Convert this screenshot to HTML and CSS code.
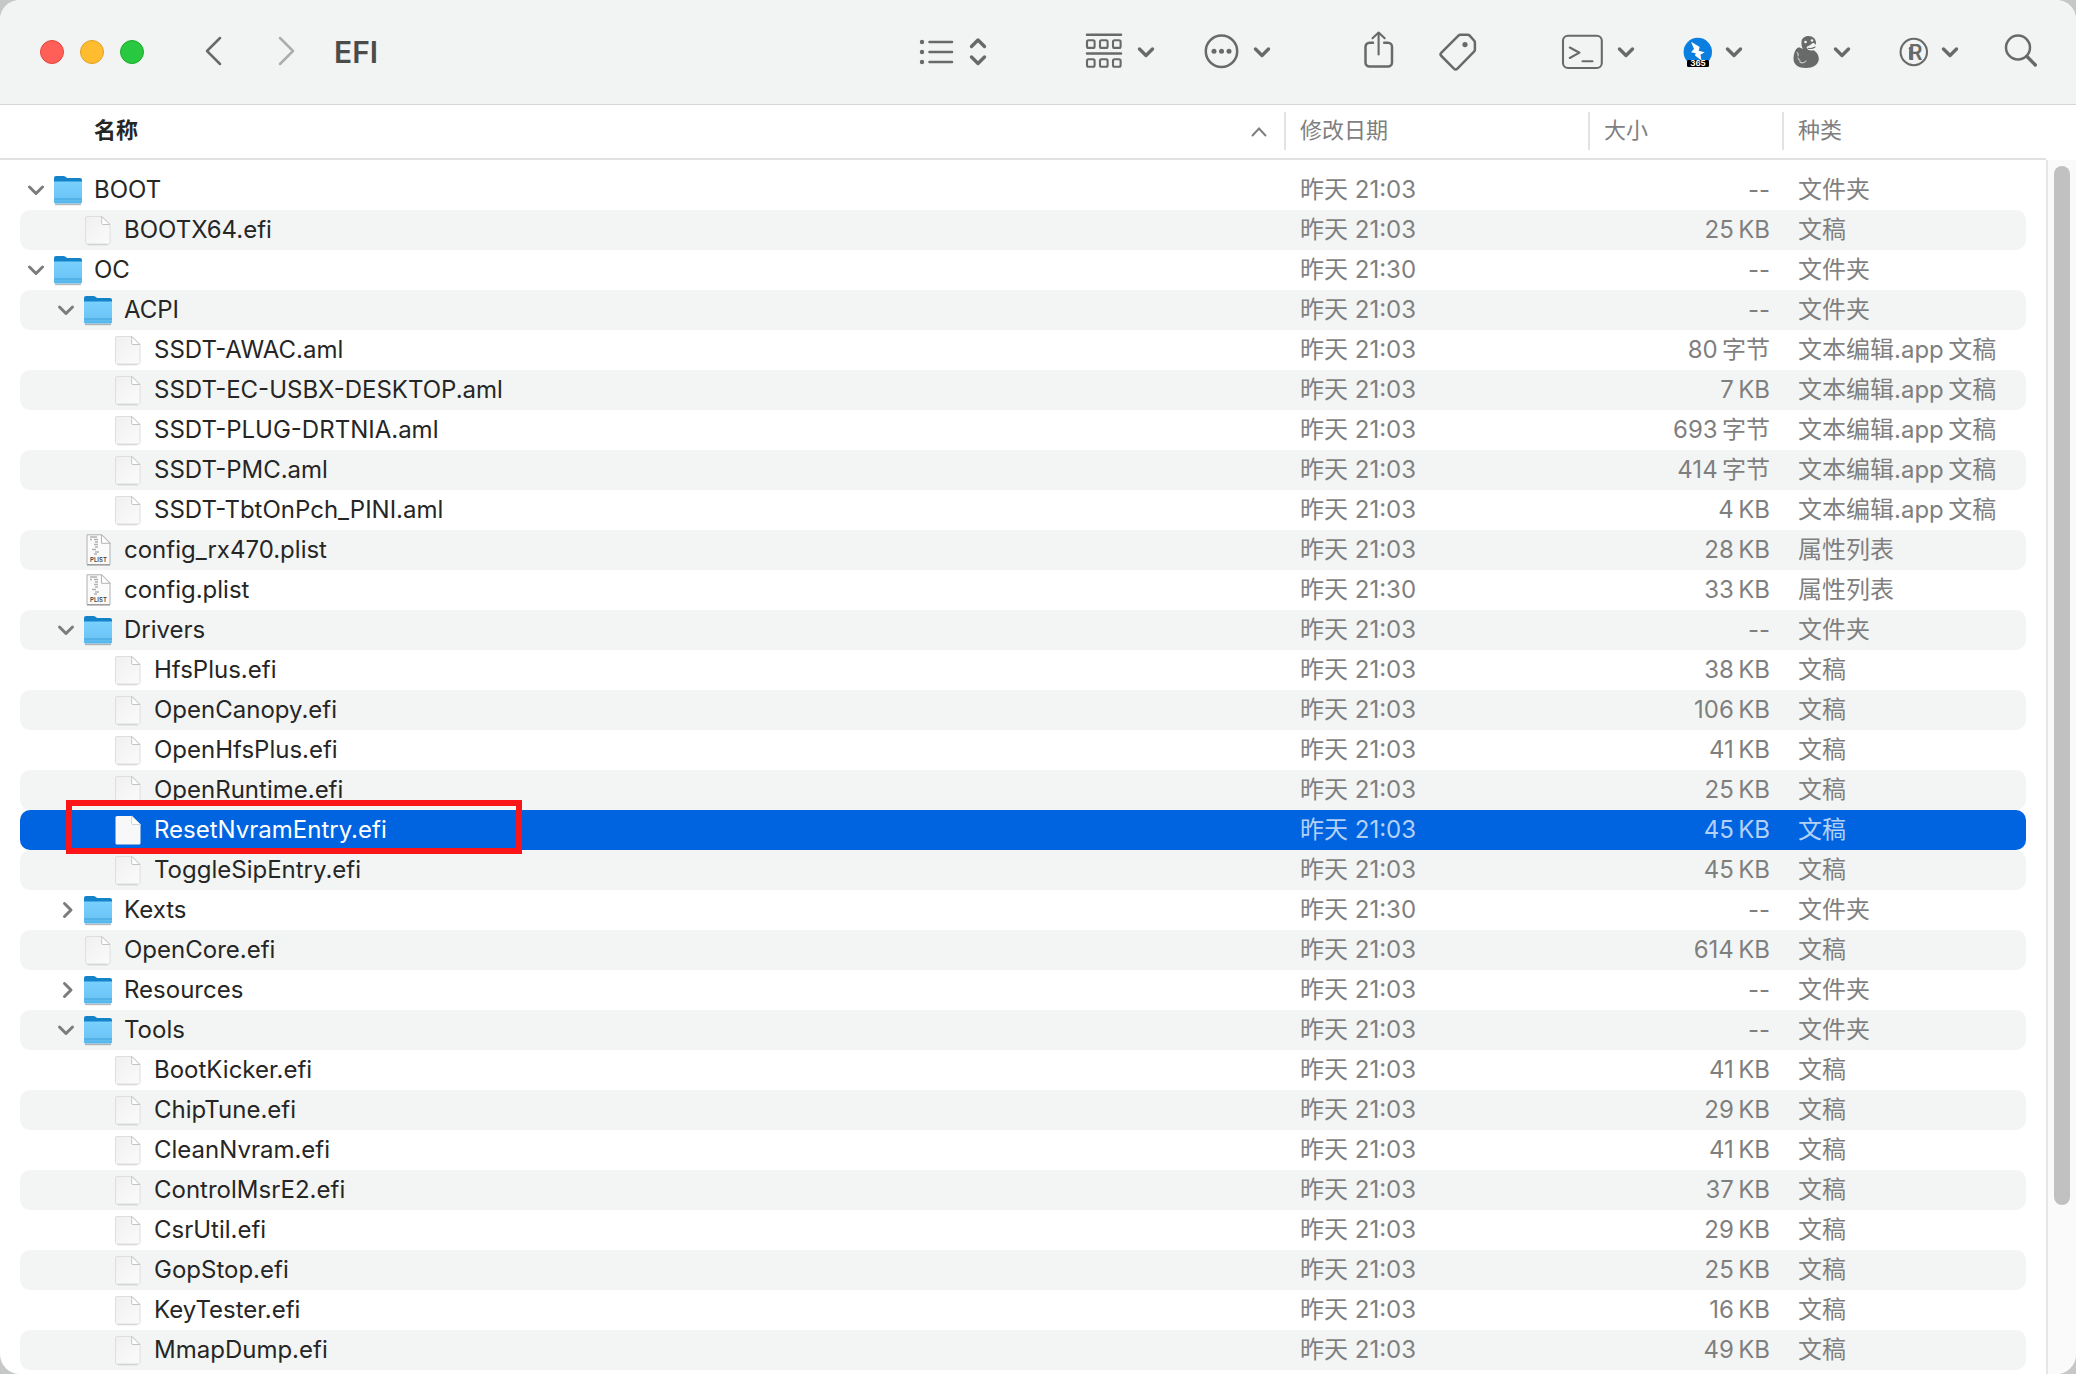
FILE: index.html
```html
<!DOCTYPE html>
<html lang="zh-CN">
<head>
<meta charset="utf-8">
<title>EFI</title>
<link rel="stylesheet" href="styles.css">
</head>
<body>
<svg class="sprite" aria-hidden="true">
  <defs>
    <linearGradient id="folder-front" x1="0" y1="0" x2="0" y2="1">
      <stop offset="0" stop-color="#78d0fd"/><stop offset="0.75" stop-color="#6cc5f6"/><stop offset="1" stop-color="#4fb2e8"/>
    </linearGradient>
    <linearGradient id="paper" x1="0" y1="0" x2="1" y2="1">
      <stop offset="0" stop-color="#f0f0f0"/><stop offset="1" stop-color="#fbfbfb"/>
    </linearGradient>
  </defs>
  <symbol id="folder" viewBox="0 0 32 32">
    <path d="M3 30.500h26" stroke="#000" stroke-opacity=".28" stroke-width="1.400"/>
    <path d="M2 4a2 2 0 0 1 2-2h7.500q1 0 2 .8l1 .7q.6.500 1.500.500H28a2 2 0 0 1 2 2v10H2z" fill="#1583c9"/>
    <path d="M2 7.500h28v20.500a1.500 1.500 0 0 1-1.500 1.500h-25A1.500 1.500 0 0 1 2 28z" fill="url(#folder-front)"/>
    <path d="M2 25h28" stroke="#3fa3dc" stroke-width="1"/>
  </symbol>
  <symbol id="file" viewBox="0 0 32 32">
    <path d="M5.500 30.700h20" stroke="#000" stroke-opacity=".18" stroke-width="1.200"/>
    <path d="M5 2.500H20L28 10.500V28.500a1.500 1.500 0 0 1-1.500 1.500H5A1.500 1.500 0 0 1 3.500 28.500V4A1.500 1.500 0 0 1 5 2.500z" fill="url(#paper)" stroke="#dedede" stroke-width="1"/>
    <path d="M19.700 2.500V9.500a1 1 0 0 0 1 1h7.300z" fill="#fff" stroke="#c4c4c4" stroke-width="1"/>
  </symbol>
  <symbol id="file-selected" viewBox="0 0 32 32">
    <path d="M5 2H20L28.500 10.500V29a1.500 1.500 0 0 1-1.500 1.500H5A1.500 1.500 0 0 1 3.500 29V3.500A1.500 1.500 0 0 1 5 2z" fill="#f8f8f8"/>
    <path d="M19.700 2V9.500a1 1 0 0 0 1 1H28.500z" fill="#fff" stroke="#cfd3da" stroke-width="1"/>
  </symbol>
  <symbol id="plist" viewBox="0 0 32 32">
    <path d="M5 .8H20L28 8.800V30.500H5z" fill="#fbfbfb" stroke="#b0b0b0" stroke-width="1"/>
    <path d="M5 31h23" stroke="#8c8c8c" stroke-width="1"/>
    <path d="M19.500 .8V9.300H28z" fill="#fff" stroke="#b4b4b4" stroke-width="1"/>
    <path d="M8 3h7M8 5.500h2M12 5.500h4M13 8h3M12 10.500h4M13 13h3M10 15.500h4M13 18h4M12 20h3" stroke="#b2b2b2" stroke-width="1.300"/>
  </symbol>
  <symbol id="open" viewBox="0 0 20 20"><path d="M3.500 7L10 13.500L16.500 7"/></symbol>
  <symbol id="closed" viewBox="0 0 20 20"><path d="M8.500 3.500L15 10L8.500 16.500"/></symbol>
</svg>

<div class="window">
  <header class="toolbar">
    <div class="lights">
      <button class="light close" aria-label="关闭"></button>
      <button class="light minimize" aria-label="最小化"></button>
      <button class="light full" aria-label="缩放"></button>
    </div>
    <nav class="history">
      <button class="tool" aria-label="后退"><svg width="20" height="40" viewBox="0 0 20 40"><path d="M16 6L3 19L16 32"/></svg></button>
      <button class="tool dim" aria-label="前进"><svg width="20" height="40" viewBox="0 0 20 40"><path d="M4 6L17 19L4 32"/></svg></button>
    </nav>
    <h1 class="title">EFI</h1>

    <div class="tools">
      <button class="tool" aria-label="显示"><svg width="82" height="40" viewBox="0 0 82 40">
        <path d="M11.500 10H34M11.500 20H34M11.500 30H34"/>
        <g class="solid"><circle cx="4" cy="10" r="2.200"/><circle cx="4" cy="20" r="2.200"/><circle cx="4" cy="30" r="2.200"/></g>
        <path class="bold" d="M53.500 14.500L60 8L66.500 14.500M53.500 25L60 31.500L66.500 25"/></svg></button>
      <div class="cluster">
        <button class="tool" aria-label="群组"><svg width="70" height="40" viewBox="0 0 70 40">
          <path d="M3 2.700H37M3 21.500H37"/>
          <g class="thin"><rect x="3" y="8.300" width="7.600" height="7.600" rx="1.500"/><rect x="16" y="8.300" width="7.600" height="7.600" rx="1.500"/><rect x="29" y="8.300" width="7.600" height="7.600" rx="1.500"/><rect x="3" y="27.200" width="7.600" height="7.600" rx="1.500"/><rect x="16" y="27.200" width="7.600" height="7.600" rx="1.500"/><rect x="29" y="27.200" width="7.600" height="7.600" rx="1.500"/></g>
          <path class="bold" d="M55.500 17L62 23.500L68.500 17"/></svg></button>
        <button class="tool" aria-label="更多"><svg width="70" height="40" viewBox="0 0 70 40">
          <circle cx="21.500" cy="19.300" r="15.700"/>
          <g class="solid"><circle cx="14" cy="19.300" r="2.500"/><circle cx="21.500" cy="19.300" r="2.500"/><circle cx="29" cy="19.300" r="2.500"/></g>
          <path class="bold" d="M55.500 17L62 23.500L68.500 17"/></svg></button>
      </div>
      <div class="cluster">
        <button class="tool" aria-label="共享"><svg width="40" height="40" viewBox="0 0 40 40">
          <path d="M19 10.700H15.500a4 4 0 0 0-4 4V30.500a4 4 0 0 0 4 4H34a4 4 0 0 0 4-4V14.700a4 4 0 0 0-4-4H30.200"/>
          <path class="thin" d="M24.600 22.500V1M18.500 6.200L24.600 .5L30.700 6.200"/></svg></button>
        <button class="tool" aria-label="标签"><svg width="36" height="40" viewBox="1 0 36 40">
          <path d="M21.500 2.700H28.500a3 3 0 0 1 2.200 1L35 8.500a3 3 0 0 1 .9 2.200V17.500a3 3 0 0 1-.9 2.200L18.400 36.600a2.500 2.500 0 0 1-3.500 0L2.400 24a2.500 2.500 0 0 1 0-3.500L19.400 3.600a3 3 0 0 1 2.100-.9z"/>
          <circle class="solid" cx="26" cy="12.600" r="2.600"/></svg></button>
      </div>
      <div class="cluster">
        <button class="tool" aria-label="终端"><svg width="74" height="40" viewBox="0 0 74 40">
          <rect class="thin" x="3" y="3.800" width="38.800" height="32.200" rx="5"/>
          <path class="thin" d="M9.800 15.500L19.500 20.700L9.800 26M22.500 29.300H32.500"/>
          <path class="bold" d="M59.500 17L66 23.500L72.500 17"/></svg></button>
        <button class="tool" aria-label="365"><svg width="62" height="40" viewBox="0 0 62 40">
          <circle cx="17.800" cy="20" r="14.200" fill="#0a7fe0" stroke="none"/>
          <path class="bolt" d="M11 9.700L19.700 15L18.700 18.700L24.700 20.300L20.500 22.700L21.500 28.500L15 23.500L15.700 21.300L11 20.300L14 17z"/>
          <rect x="7" y="28" width="22" height="7" rx="1.500" fill="#000" stroke="none"/>
          <text x="18" y="34.200" text-anchor="middle" class="badge-label">365</text>
          <path class="bold" d="M47.500 17L54 23.500L60.500 17"/></svg></button>
        <button class="tool" aria-label="Duck"><svg width="62" height="40" viewBox="0 0 62 40">
          <path class="solid" d="M13.500 10C13.500 6.500 16.500 4 20.500 4C25 4 28 7 28 11C28 14 26.500 16.500 25 18C29 20 31 23.500 30.800 27.500C30.300 32.500 25 36 18 36C10.500 36 5.500 33 5.500 26.500C5.500 21.500 7 17.500 10 15.500C12 15.300 13.500 16 15 17C13.800 15 13.200 12.500 13.500 10z"/>
          <path d="M18.500 15.500C19.500 13.500 22 13.800 23.500 12C25 10 27.500 11.500 28 13.500C28.500 16 26.500 18.500 23.500 18.500C21 18.500 19 17.500 18.500 15.500z" fill="#f1f4f3" stroke="none"/>
          <path class="hair" d="M20 16.200C22 16.700 25 16.500 27 15"/>
          <circle cx="17.500" cy="10" r="1.300" fill="#f1f4f3" stroke="none"/><circle cx="24" cy="8.500" r="1.300" fill="#f1f4f3" stroke="none"/>
          <path class="hair light-line" d="M10 26C11 28.500 12.500 27.500 12 30C14 31.500 16.500 31 18 29M9 20.500C10 21 10.500 22 10 24"/>
          <path class="bold" d="M47.500 17L54 23.500L60.500 17"/></svg></button>
        <button class="tool" aria-label="iR"><svg width="62" height="40" viewBox="0 0 62 40">
          <circle class="thin" cx="17.800" cy="20" r="13.200"/>
          <text x="19.500" y="28" text-anchor="middle" class="logo-letter">R</text>
          <path d="M14.300 19V26.700"/><circle class="solid" cx="14.300" cy="16.400" r="1.600"/>
          <path class="bold" d="M47.500 17L54 23.500L60.500 17"/></svg></button>
        <button class="tool" aria-label="搜索"><svg width="34" height="40" viewBox="0 0 34 40">
          <circle cx="14" cy="15.500" r="12"/><path class="bold" d="M23 24.500L31.300 33"/></svg></button>
      </div>
    </div>
  </header>

  <main class="browser">
    <table class="files">
      <thead>
        <tr>
          <th scope="col" class="col-name"><span>名称</span><svg class="caret" width="16" height="10" viewBox="0 0 16 10"><path d="M1.500 8.500L8 1.500L14.500 8.500"/></svg></th>
          <th scope="col">修改日期</th>
          <th scope="col">大小</th>
          <th scope="col">种类</th>
        </tr>
      </thead>
      <tbody>
        <tr><td class="name"><button class="twist" aria-label="折叠"><svg><use href="#open"/></svg></button><svg class="icon"><use href="#folder"/></svg>BOOT</td><td>昨天 21:03</td><td class="size">--</td><td>文件夹</td></tr>
        <tr><td class="name l1"><svg class="icon"><use href="#file"/></svg>BOOTX64.efi</td><td>昨天 21:03</td><td class="size">25&#8201;KB</td><td>文稿</td></tr>
        <tr><td class="name"><button class="twist" aria-label="折叠"><svg><use href="#open"/></svg></button><svg class="icon"><use href="#folder"/></svg>OC</td><td>昨天 21:30</td><td class="size">--</td><td>文件夹</td></tr>
        <tr><td class="name l1"><button class="twist" aria-label="折叠"><svg><use href="#open"/></svg></button><svg class="icon"><use href="#folder"/></svg>ACPI</td><td>昨天 21:03</td><td class="size">--</td><td>文件夹</td></tr>
        <tr><td class="name l2"><svg class="icon"><use href="#file"/></svg>SSDT-AWAC.aml</td><td>昨天 21:03</td><td class="size">80&#8201;字节</td><td>文本编辑.app&#8201;文稿</td></tr>
        <tr><td class="name l2"><svg class="icon"><use href="#file"/></svg>SSDT-EC-USBX-DESKTOP.aml</td><td>昨天 21:03</td><td class="size">7&#8201;KB</td><td>文本编辑.app&#8201;文稿</td></tr>
        <tr><td class="name l2"><svg class="icon"><use href="#file"/></svg>SSDT-PLUG-DRTNIA.aml</td><td>昨天 21:03</td><td class="size">693&#8201;字节</td><td>文本编辑.app&#8201;文稿</td></tr>
        <tr><td class="name l2"><svg class="icon"><use href="#file"/></svg>SSDT-PMC.aml</td><td>昨天 21:03</td><td class="size">414&#8201;字节</td><td>文本编辑.app&#8201;文稿</td></tr>
        <tr><td class="name l2"><svg class="icon"><use href="#file"/></svg>SSDT-TbtOnPch_PINI.aml</td><td>昨天 21:03</td><td class="size">4&#8201;KB</td><td>文本编辑.app&#8201;文稿</td></tr>
        <tr><td class="name l1"><svg class="icon" viewBox="0 0 32 32"><use href="#plist"/><text x="16.500" y="27.500" text-anchor="middle" class="plist-label">PLIST</text></svg>config_rx470.plist</td><td>昨天 21:03</td><td class="size">28&#8201;KB</td><td>属性列表</td></tr>
        <tr><td class="name l1"><svg class="icon" viewBox="0 0 32 32"><use href="#plist"/><text x="16.500" y="27.500" text-anchor="middle" class="plist-label">PLIST</text></svg>config.plist</td><td>昨天 21:30</td><td class="size">33&#8201;KB</td><td>属性列表</td></tr>
        <tr><td class="name l1"><button class="twist" aria-label="折叠"><svg><use href="#open"/></svg></button><svg class="icon"><use href="#folder"/></svg>Drivers</td><td>昨天 21:03</td><td class="size">--</td><td>文件夹</td></tr>
        <tr><td class="name l2"><svg class="icon"><use href="#file"/></svg>HfsPlus.efi</td><td>昨天 21:03</td><td class="size">38&#8201;KB</td><td>文稿</td></tr>
        <tr><td class="name l2"><svg class="icon"><use href="#file"/></svg>OpenCanopy.efi</td><td>昨天 21:03</td><td class="size">106&#8201;KB</td><td>文稿</td></tr>
        <tr><td class="name l2"><svg class="icon"><use href="#file"/></svg>OpenHfsPlus.efi</td><td>昨天 21:03</td><td class="size">41&#8201;KB</td><td>文稿</td></tr>
        <tr><td class="name l2"><svg class="icon"><use href="#file"/></svg>OpenRuntime.efi</td><td>昨天 21:03</td><td class="size">25&#8201;KB</td><td>文稿</td></tr>
        <tr class="selected"><td class="name l2"><svg class="icon"><use href="#file-selected"/></svg>ResetNvramEntry.efi<span class="marker"></span></td><td>昨天 21:03</td><td class="size">45&#8201;KB</td><td>文稿</td></tr>
        <tr><td class="name l2"><svg class="icon"><use href="#file"/></svg>ToggleSipEntry.efi</td><td>昨天 21:03</td><td class="size">45&#8201;KB</td><td>文稿</td></tr>
        <tr><td class="name l1"><button class="twist" aria-label="展开"><svg><use href="#closed"/></svg></button><svg class="icon"><use href="#folder"/></svg>Kexts</td><td>昨天 21:30</td><td class="size">--</td><td>文件夹</td></tr>
        <tr><td class="name l1"><svg class="icon"><use href="#file"/></svg>OpenCore.efi</td><td>昨天 21:03</td><td class="size">614&#8201;KB</td><td>文稿</td></tr>
        <tr><td class="name l1"><button class="twist" aria-label="展开"><svg><use href="#closed"/></svg></button><svg class="icon"><use href="#folder"/></svg>Resources</td><td>昨天 21:03</td><td class="size">--</td><td>文件夹</td></tr>
        <tr><td class="name l1"><button class="twist" aria-label="折叠"><svg><use href="#open"/></svg></button><svg class="icon"><use href="#folder"/></svg>Tools</td><td>昨天 21:03</td><td class="size">--</td><td>文件夹</td></tr>
        <tr><td class="name l2"><svg class="icon"><use href="#file"/></svg>BootKicker.efi</td><td>昨天 21:03</td><td class="size">41&#8201;KB</td><td>文稿</td></tr>
        <tr><td class="name l2"><svg class="icon"><use href="#file"/></svg>ChipTune.efi</td><td>昨天 21:03</td><td class="size">29&#8201;KB</td><td>文稿</td></tr>
        <tr><td class="name l2"><svg class="icon"><use href="#file"/></svg>CleanNvram.efi</td><td>昨天 21:03</td><td class="size">41&#8201;KB</td><td>文稿</td></tr>
        <tr><td class="name l2"><svg class="icon"><use href="#file"/></svg>ControlMsrE2.efi</td><td>昨天 21:03</td><td class="size">37&#8201;KB</td><td>文稿</td></tr>
        <tr><td class="name l2"><svg class="icon"><use href="#file"/></svg>CsrUtil.efi</td><td>昨天 21:03</td><td class="size">29&#8201;KB</td><td>文稿</td></tr>
        <tr><td class="name l2"><svg class="icon"><use href="#file"/></svg>GopStop.efi</td><td>昨天 21:03</td><td class="size">25&#8201;KB</td><td>文稿</td></tr>
        <tr><td class="name l2"><svg class="icon"><use href="#file"/></svg>KeyTester.efi</td><td>昨天 21:03</td><td class="size">16&#8201;KB</td><td>文稿</td></tr>
        <tr><td class="name l2"><svg class="icon"><use href="#file"/></svg>MmapDump.efi</td><td>昨天 21:03</td><td class="size">49&#8201;KB</td><td>文稿</td></tr>
      </tbody>
    </table>
    <div class="scrollbar"><div class="thumb"></div></div>
  </main>
</div>
</body>
</html>
```
FILE: styles.css
```css
* { box-sizing: border-box; }

body {
  margin: 0;
  background: #c6c8c8;
  color: #262626;
  font: 24px/40px Inter, "Noto Sans CJK SC", sans-serif;
}

button {
  display: block;
  margin: 0;
  padding: 0;
  border: 0;
  background: none;
}

svg { display: block; }
.sprite { position: absolute; width: 0; height: 0; }

.window {
  display: flex;
  flex-direction: column;
  height: 100vh;
  overflow: hidden;
  border-radius: 20px;
  background: #fff;
}

/* Toolbar */
.toolbar {
  display: flex;
  flex: none;
  align-items: center;
  height: 105px;
  padding: 0 38px 0 40px;
  border-bottom: 1px solid #d6d8d7;
  background: #f1f4f3;
}

.lights { display: flex; gap: 16px; }
.light { width: 24px; height: 24px; border: 1px solid; border-radius: 50%; }
.close { border-color: #e2463f; background: #ff5f57; }
.minimize { border-color: #e1a024; background: #febc2e; }
.full { border-color: #1dad2b; background: #28c840; }

.history { display: flex; gap: 52px; margin-left: 60px; }
.title { margin: 0 0 0 38px; font-size: 30px; font-weight: 600; color: #4a4c4b; }

.tools { display: flex; gap: 84px; margin-left: auto; }
.cluster { display: flex; gap: 46px; }

.tool svg {
  overflow: visible;
  fill: none;
  stroke: #676a69;
  stroke-width: 2.5;
  stroke-linecap: round;
  stroke-linejoin: round;
}
.tool .bold { stroke-width: 3.4; }
.tool .thin { stroke-width: 2.1; }
.tool .hair { stroke-width: 1.1; }
.tool .light-line { stroke: #c9cccb; }
.tool .solid { fill: #676a69; stroke: none; }
.tool .bolt { fill: #fff; stroke: none; }
.dim { opacity: 0.5; }
.badge-label { fill: #fff; stroke: none; font: 700 8px Inter, sans-serif; }
.logo-letter { fill: #676a69; stroke: none; font: 600 21px Inter, sans-serif; }
.plist-label { fill: #444; font: 600 6px Inter, sans-serif; }

/* File list */
.browser { display: flex; flex: 1; min-height: 0; }

.files { display: flex; flex: 1; flex-direction: column; min-width: 0; }
.files thead { display: block; border-bottom: 2px solid #e1e1e1; }
.files tbody { display: block; padding-top: 10px; }
.files tr {
  display: grid;
  grid-template-columns: minmax(0, 1fr) 304px 194px 244px;
  margin: 0 20px;
}

.files th {
  margin: 7px 0 8px;
  padding: 0 14px 2px;
  border-left: 2px solid #e3e3e3;
  color: #7f7f7f;
  font-size: 22px;
  font-weight: 400;
  line-height: 36px;
  text-align: left;
}
.files .col-name {
  display: flex;
  align-items: center;
  justify-content: space-between;
  padding: 0 17px 2px 74px;
  border: 0;
  color: #262626;
  font-weight: 700;
}
.caret {
  margin-top: 4px;
  fill: none;
  stroke: #7f7f7f;
  stroke-width: 2;
  stroke-linecap: round;
}

.files tbody tr { height: 40px; border-radius: 10px; }
.files tbody tr:nth-child(even) { background: #f3f5f4; }
.files td { padding: 0 0 0 16px; color: #7f7f7f; white-space: nowrap; }
.files .size { padding: 0 12px 0 0; text-align: right; }

.files .name {
  position: relative;
  display: flex;
  align-items: center;
  padding-left: 6px;
  color: #262626;
}
.files .l1 { padding-left: 36px; }
.files .l2 { padding-left: 66px; }
.twist { width: 20px; height: 20px; }
.twist svg {
  width: 20px;
  height: 20px;
  fill: none;
  stroke: #7c7c7c;
  stroke-width: 3;
  stroke-linecap: round;
  stroke-linejoin: round;
}
.icon { flex: none; width: 32px; height: 32px; margin: 0 10px 0 6px; }
.icon:first-child { margin-left: 26px; }

.files tbody .selected { background: #0064e1; }
.files .selected td { color: #b3d0f6; }
.files .selected .name { color: #fff; }

/* Red frame drawn round the selected file */
.marker {
  position: absolute;
  top: -10px;
  left: 46px;
  width: 456px;
  height: 54px;
  border: 6px solid #fb1418;
}

/* Scrollbar */
.scrollbar {
  display: flex;
  justify-content: center;
  width: 30px;
  margin-top: 55px;
  padding: 6px 0 0;
  border-left: 2px solid #e6e6e6;
  background: #fafafa;
}
.thumb { width: 16px; height: 86%; border-radius: 8px; background: #c1c1c1; }
```
